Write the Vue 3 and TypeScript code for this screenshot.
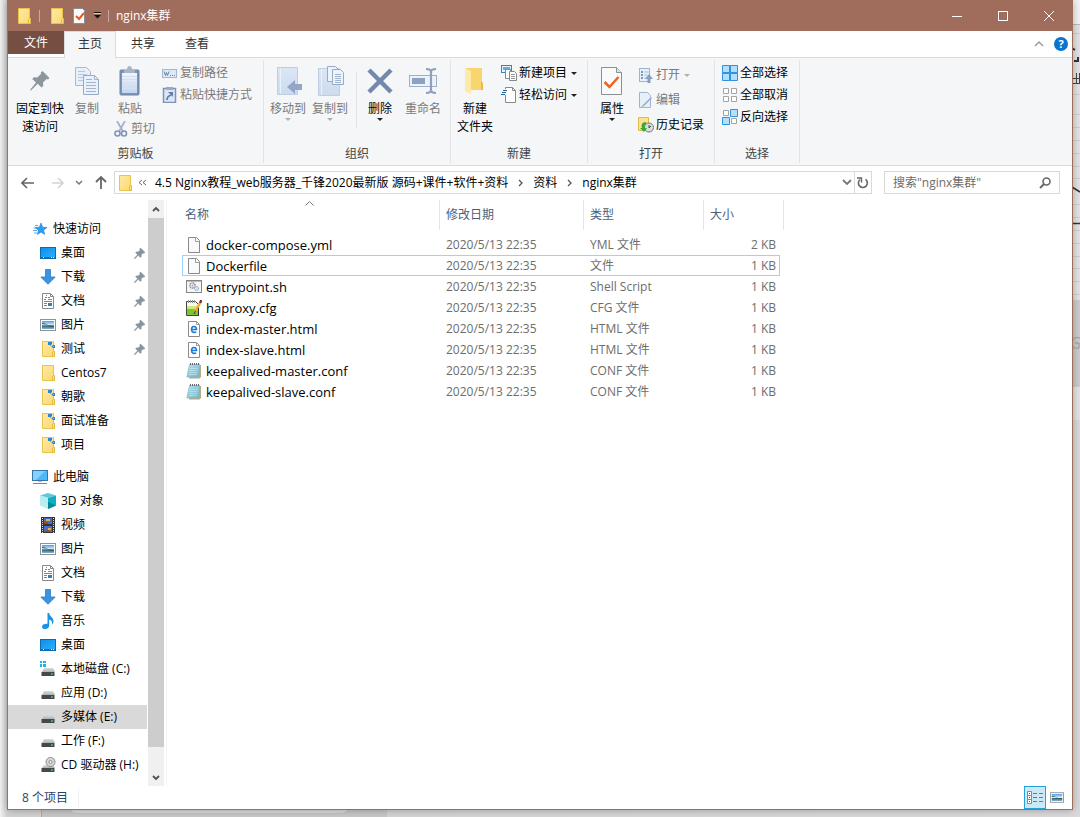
<script setup lang="ts">
import { ref } from 'vue'

interface NavItem {
  icon: string
  label: string
  pinned?: boolean
  selected?: boolean
}

interface FileRow {
  icon: string
  name: string
  date: string
  type: string
  size: string
  focused?: boolean
}

const query = ref('')

const tabs = ['主页', '共享', '查看']

const quickAccess: NavItem[] = [
  { icon: 'desktop', label: '桌面', pinned: true },
  { icon: 'download', label: '下载', pinned: true },
  { icon: 'document', label: '文档', pinned: true },
  { icon: 'picture', label: '图片', pinned: true },
  { icon: 'folder-mark', label: '测试', pinned: true },
  { icon: 'folder', label: 'Centos7' },
  { icon: 'folder-mark', label: '朝歌' },
  { icon: 'folder-mark', label: '面试准备' },
  { icon: 'folder-mark', label: '项目' },
]

const thisPc: NavItem[] = [
  { icon: 'cube', label: '3D 对象' },
  { icon: 'video', label: '视频' },
  { icon: 'picture', label: '图片' },
  { icon: 'document', label: '文档' },
  { icon: 'download', label: '下载' },
  { icon: 'music', label: '音乐' },
  { icon: 'desktop', label: '桌面' },
  { icon: 'drive-os', label: '本地磁盘 (C:)' },
  { icon: 'drive', label: '应用 (D:)' },
  { icon: 'drive', label: '多媒体 (E:)', selected: true },
  { icon: 'drive', label: '工作 (F:)' },
  { icon: 'drive-cd', label: 'CD 驱动器 (H:)' },
]

const date = '2020/5/13 22:35'
const files: FileRow[] = [
  { icon: 'file', name: 'docker-compose.yml', date, type: 'YML 文件', size: '2 KB' },
  { icon: 'file', name: 'Dockerfile', date, type: '文件', size: '1 KB', focused: true },
  { icon: 'shell', name: 'entrypoint.sh', date, type: 'Shell Script', size: '1 KB' },
  { icon: 'notepad-plus', name: 'haproxy.cfg', date, type: 'CFG 文件', size: '1 KB' },
  { icon: 'html', name: 'index-master.html', date, type: 'HTML 文件', size: '1 KB' },
  { icon: 'html', name: 'index-slave.html', date, type: 'HTML 文件', size: '1 KB' },
  { icon: 'conf', name: 'keepalived-master.conf', date, type: 'CONF 文件', size: '1 KB' },
  { icon: 'conf', name: 'keepalived-slave.conf', date, type: 'CONF 文件', size: '1 KB' },
]
</script>

<template>
  <div class="desktop">
    <svg class="behind-right" width="8" height="420" viewBox="0 0 8 420" aria-hidden="true">
      <rect width="8" height="24" fill="#f4f4f4" />
      <rect y="24" width="8" height="1" fill="#bbb" />
      <path d="M0 33.500h8M0 94.500h8M0 114.500h8M0 127.500h8M0 140.500h8M0 153.500h8M0 166.500h8M0 178.500h8M0 204.500h8M0 217.500h8M0 230.500h8M0 243.500h8M0 256.500h8M0 268.500h8M0 281.500h8M0 294.500h8" stroke="#d0d0d0" />
      <path d="M0 48l3 2M2 61h4v-4" stroke="#334" stroke-width="2" fill="none" />
      <path d="M0 78.500h8M0 83.500h8M4.500 73v10M7.500 73v10" stroke="#444" />
      <path d="M0 187l8 5M0 223.500h8" stroke="#333" stroke-width="1.500" />
      <rect y="300" width="8" height="87" fill="#cdcdcd" />
      <path d="M8 338c-4-1-8 0-8 5s4 6 7 5v-5H3" stroke="#999" fill="none" />
    </svg>
    <svg class="behind-bottom" width="346" height="8" viewBox="0 0 346 8" aria-hidden="true">
      <path d="M.5 0v8" fill="none" stroke="#aaa" />
      <path d="M30 0v1q1 3 6 3h264q6 0 6-3V0z" fill="#dcdcdc" />
      <path d="M306 1.500q0 3-6 3H36q-6 0-6-3" fill="none" stroke="#c4c4c4" />
    </svg>

    <svg class="sprite" width="0" height="0" aria-hidden="true">
      <defs>
        <linearGradient id="g-folder" x2="1" y2="1"><stop offset="0" stop-color="#ffe9a3" /><stop offset="1" stop-color="#fbd970" /></linearGradient>
        <linearGradient id="g-blue" x2="1" y2="1"><stop offset="0" stop-color="#0f8eea" /><stop offset="1" stop-color="#2cb1ff" /></linearGradient>
        <linearGradient id="g-pale" x2="0" y2="1"><stop offset="0" stop-color="#dbe6f5" /><stop offset="1" stop-color="#cddbee" /></linearGradient>
        <linearGradient id="g-clip" x2="0" y2="1"><stop offset="0" stop-color="#f0f5fc" /><stop offset="1" stop-color="#c3d5ef" /></linearGradient>
        <linearGradient id="g-drive" x2="0" y2="1"><stop offset="0" stop-color="#dcdcdc" /><stop offset="1" stop-color="#aeb1b4" /></linearGradient>
        <linearGradient id="g-pic" x2="0" y2="1"><stop offset="0" stop-color="#4d9ae8" /><stop offset=".5" stop-color="#dcefff" /><stop offset=".6" stop-color="#315e63" /><stop offset="1" stop-color="#8cb6cf" /></linearGradient>
        <linearGradient id="g-conf" x2="1" y2="1"><stop offset="0" stop-color="#b5e2ec" /><stop offset="1" stop-color="#6fb4c8" /></linearGradient>
      </defs>
      <symbol id="i-folder" viewBox="0 0 16 16">
        <path d="M2.500.5h11v10.500h1v4.500h-12z" fill="url(#g-folder)" stroke="#e9c34b" />
        <path d="M12.500 15.500v-4l1-1h1v5z" fill="#ffe28a" stroke="#e2b93c" />
      </symbol>
      <symbol id="i-folder-mark" viewBox="0 0 16 16">
        <path d="M2.500.5h11v10.500h1v4.500h-12z" fill="url(#g-folder)" stroke="#e9c34b" />
        <path d="M12.500 15.500v-4l1-1h1v5z" fill="#ffe28a" stroke="#e2b93c" />
        <path d="M8 1h4v3H8zM12 4h3v3h-3z" fill="#3183c5" />
        <path d="M11 3l3 3M10 4l3 3" stroke="#78b5df" />
      </symbol>
      <symbol id="i-tick" viewBox="0 0 16 16">
        <path d="M2.500.5h9l2 2v13h-11z" fill="#fafafa" stroke="#8a8f96" />
        <path d="M5 8l3 3 5-6" fill="none" stroke="#f2561d" stroke-width="2" />
      </symbol>
      <symbol id="i-pin" viewBox="0 0 10 10">
        <path d="M6 0l4 4-1 .8-.8-.3L6.500 6.200l.1 1.600-.8.8L3.900 6.700.5 10 0 9.500 3.300 6.100 1.500 4.300l.8-.8 1.600.1L5.600 1.900 5.200.9z" fill="#8494a0" stroke="#8494a0" stroke-width=".5" />
      </symbol>
      <symbol id="i-star" viewBox="0 0 16 16">
        <path d="M9 2l1.600 4.200 4.400.3-3.500 2.700 1.200 4.300L9 11.100l-3.700 2.400 1.200-4.300L3 6.500l4.400-.3z" fill="#2a9df0" stroke="#1a7fd0" stroke-width=".6" />
        <path d="M3 4.500h3M1.500 7h3M1 9.500h4M2 12h3" stroke="#4cb0f2" />
      </symbol>
      <symbol id="i-desktop" viewBox="0 0 16 16">
        <rect x=".5" y="2.500" width="15" height="11" fill="url(#g-blue)" stroke="#0a6cae" />
        <path d="M1 12.500h14" stroke="#0b6fb9" /><path d="M3 12.500h1M11 12.500h1M13 12.500h1" stroke="#fff" />
      </symbol>
      <symbol id="i-download" viewBox="0 0 16 16">
        <path d="M5.500.5h5V8h4.700L8 15.300.8 8h4.700z" fill="#3a94e4" stroke="#2c7cc6" stroke-width=".8" />
      </symbol>
      <symbol id="i-document" viewBox="0 0 16 16">
        <path d="M2.500.5h8l3 3v12h-11z" fill="#fff" stroke="#84888c" /><path d="M10.500.5v3h3" fill="none" stroke="#84888c" />
        <path d="M4 6.500h2M5 4.500h2M6 2.500h1M8 4.500h2M8 6.500h4M4 8.500h8M4 10.500h3M4 12.500h3" fill="none" stroke="#2a9be8" />
        <path d="M8 10h4v3H8z" fill="#3f7f9d" />
      </symbol>
      <symbol id="i-picture" viewBox="0 0 16 16">
        <rect x=".5" y="2.500" width="15" height="11" fill="#fff" stroke="#8d9296" />
        <rect x="2" y="4" width="12" height="8" fill="url(#g-pic)" />
        <path d="M2 7l4 .5 4 2 4 .5v-1L9 8.500 5 6.500 2 6z" fill="#2d5b50" />
      </symbol>
      <symbol id="i-pc" viewBox="0 0 16 16">
        <rect x=".5" y="1.500" width="15" height="10" fill="#4bb9fa" stroke="#3976a8" /><path d="M1 2h12L4 11H1z" fill="#86d2ff" />
        <path d="M6 12h4v1H6z" fill="#9dc3dc" /><path d="M1 14.500h14" stroke="#6888a8" />
      </symbol>
      <symbol id="i-cube" viewBox="0 0 16 16">
        <path d="M0 2.500L8 0l8 2.500L8 5z" fill="#62c8d8" /><path d="M0 2.500L8 5v11l-8-3.500z" fill="#b8eef0" /><path d="M16 2.500L8 5v11l8-3.500z" fill="#10aebf" /><path d="M8 9l8 3.500L8 16z" fill="#068898" />
      </symbol>
      <symbol id="i-video" viewBox="0 0 16 16">
        <path d="M1 0h14v16H1z" fill="#333" /><path d="M4 1h8v6H4zM4 9h8v6H4z" fill="#4470c8" />
        <path d="M6 2h4v2H6zM8 11h3v2H8z" fill="#e6b52b" /><path d="M4 5h4v2H4zM5 13h4v2H5z" fill="#a74232" />
        <path d="M2.500 1v15M13.500 1v15" stroke="#ddd" stroke-dasharray="1 1" />
      </symbol>
      <symbol id="i-music" viewBox="0 0 16 16">
        <path d="M7.500 0h1.700c0 3 4.300 4.500 4.300 8.200 0 1.500-.6 2.500-1.500 3.600.6-2.900-.4-4.600-2.800-5.300v6.300c0 1.800-1.700 3.200-3.900 3.200-1.900 0-3.300-.9-3.300-2.300 0-1.800 2.300-3.200 5.500-2.900z" fill="#1693ea" />
      </symbol>
      <symbol id="i-drive" viewBox="0 0 16 16">
        <path d="M4 6h9l2 4H2z" fill="url(#g-drive)" /><path d="M1.500 10h13v4h-13z" fill="#45494c" /><path d="M11 12h2" stroke="#5df28b" />
      </symbol>
      <symbol id="i-drive-os" viewBox="0 0 16 16">
        <path d="M4 7h9l2 4H2z" fill="url(#g-drive)" /><path d="M1.500 11h13v4h-13z" fill="#45494c" /><path d="M11 13h2" stroke="#5df28b" />
        <path d="M0 0h2v2H0zM3 0h3v2H3zM0 3h2v3H0zM3 3h3v3H3z" fill="#19b7e8" />
      </symbol>
      <symbol id="i-drive-cd" viewBox="0 0 16 16">
        <path d="M4 8h9l2 3H2z" fill="url(#g-drive)" /><path d="M1.500 11h13v4h-13z" fill="#45494c" /><path d="M11 13h2" stroke="#5df28b" />
        <circle cx="10.500" cy="5" r="4.500" fill="#d8d8d8" stroke="#8e8e8e" /><circle cx="10.500" cy="5" r="1.500" fill="#fff" stroke="#888" />
      </symbol>
      <symbol id="i-file" viewBox="0 0 16 16">
        <path d="M2.500.5h8l3 3v12h-11z" fill="#fafafa" stroke="#8a8a8a" /><path d="M9.500.5v4h4" fill="none" stroke="#9c9c9c" />
      </symbol>
      <symbol id="i-shell" viewBox="0 0 16 16">
        <rect x=".5" y="1.500" width="15" height="12" fill="#f5f5f5" stroke="#858585" /><path d="M1 2.500h14" stroke="#bcbcbc" />
        <circle cx="6.500" cy="6.500" r="2.600" fill="none" stroke="#8b9299" stroke-dasharray="1.200 .6" stroke-width="1.600" /><circle cx="6.500" cy="6.500" r="1" fill="#aaa" />
        <circle cx="10.500" cy="9.500" r="2" fill="#d5e6f4" stroke="#76a3c4" stroke-dasharray="1.200 .5" />
      </symbol>
      <symbol id="i-notepad-plus" viewBox="0 0 16 16">
        <path d="M.5 1.500h9l3 3v11H.5z" fill="#f8faf0" stroke="#444" /><path d="M1 6h11v5H1z" fill="#cdea7c" /><path d="M1 9h11v6H1z" fill="#7cc434" />
        <path d="M2.500 0v3M4.500 0v3M6.500 0v3M8.500 0v3" stroke="#999" /><path d="M14 3L9 12" stroke="#f0a92a" stroke-width="2.500" /><path d="M15.500 0L14 3" stroke="#902828" stroke-width="2.500" /><path d="M9.500 11L8 14" stroke="#433" /><path d="M12.500 8v8" stroke="#333" />
      </symbol>
      <symbol id="i-html" viewBox="0 0 16 16">
        <path d="M2.500.5h8l3 3v12h-11z" fill="#fff" stroke="#8a8a8a" /><path d="M10.500.5v3h3" fill="none" stroke="#9c9c9c" />
        <path d="M6 8.500h4.500C10.500 4.500 5.500 4.500 5.500 8.300c0 3.400 3 3.500 4.700 2.600" fill="none" stroke="#1a7cd8" stroke-width="1.600" />
      </symbol>
      <symbol id="i-conf" viewBox="0 0 16 16">
        <path d="M5 2h10v12l-1.500 1.500H3z" fill="#b5ac86" /><path d="M3.500 1.500h10.500L12.500 14H.8z" fill="url(#g-conf)" stroke="#7fb2c0" stroke-width=".6" />
        <path d="M4 5.500h8M3.500 7.500h8M3.500 9.500h8M3 11.500h8" stroke="#c4e8f1" stroke-width=".6" /><path d="M4.500 0v2M6.500 0v2M8.500 0v2M10.500 0v2M12.500 0v2" stroke="#667" />
      </symbol>
    </svg>

    <main class="window">
      <header class="titlebar">
        <svg class="ic16" aria-hidden="true"><use href="#i-folder" /></svg>
        <i class="tsep"></i>
        <svg class="ic16 tb-folder" aria-hidden="true"><use href="#i-folder" /></svg>
        <svg class="ic16 tb-tick" aria-hidden="true"><use href="#i-tick" /></svg>
        <button class="bare tb-more" aria-label="自定义快速访问工具栏">
          <svg width="7" height="7" viewBox="0 0 7 7"><path d="M0 .5h7" stroke="#111" /><path d="M0 3h7L3.500 6.500z" fill="#111" /><path d="M0 1.500h7" stroke="#dcc" /></svg>
        </button>
        <i class="tsep"></i>
        <h1>nginx集群</h1>
        <div class="winbtns">
          <button class="bare" aria-label="最小化"><svg width="10" height="10"><path d="M0 5.500h10" stroke="#fff" /></svg></button>
          <button class="bare" aria-label="最大化"><svg width="10" height="10"><rect x=".5" y=".5" width="9" height="9" fill="none" stroke="#fff" /></svg></button>
          <button class="bare" aria-label="关闭"><svg width="10" height="10"><path d="M0 0l10 10M10 0L0 10" stroke="#fff" /></svg></button>
        </div>
      </header>

      <nav class="tabs">
        <button class="tab file">文件</button>
        <button v-for="(t, i) in tabs" :key="t" class="tab" :class="{ active: i === 0 }">{{ t }}</button>
        <div class="tabs-right">
          <button class="bare" aria-label="折叠功能区"><svg width="10" height="6"><path d="M1 5l4-4 4 4" fill="none" stroke="#a0a0a0" stroke-width="1.500" /></svg></button>
          <button class="bare help" aria-label="帮助">?</button>
        </div>
      </nav>

      <section class="ribbon">
        <div class="group g-clip">
          <div class="body">
            <button class="big w-pin">
              <svg width="22" height="28" viewBox="0 0 22 28"><path d="M13.500 4l7 7-1.500 1.500-1.500-.5-3.500 3.500.3 3.200-1.800 1.800-3.800-3.800L2 23.500 1 23l6-7.500-3.800-3.500L5 10.200l3.200.3L12 7l-.2-1.500z" fill="#8c979d" /></svg>
              <span>固定到快<br>速访问</span>
            </button>
            <button class="big w-copy off">
              <svg width="26" height="28" viewBox="0 0 26 28"><path d="M1.500.5h11l4 4v14h-15z" fill="#e7eff9" stroke="#a7bbd7" /><path d="M4 4.500h7M4 7.500h9M4 10.500h9M4 13.500h9" stroke="#b5c6de" /><path d="M9.500 8.500h11l4 4v15h-15z" fill="#eaf1fa" stroke="#97abc9" /><path d="M20.500 8.500v4h4M12 12.500h6M12 15.500h10M12 18.500h10M12 21.500h10M12 24.500h10" fill="none" stroke="#a1b4d0" /></svg>
              <span>复制</span>
            </button>
            <div class="stack w-paste">
              <button class="big off">
                <svg width="22" height="30" viewBox="0 0 22 30"><rect x="1" y="4" width="19" height="25" rx="1" fill="#7f93b8" stroke="#6f85ab" /><path d="M3 7h15v20H3z" fill="url(#g-clip)" /><path d="M3 10.500h15M3 13.500h15M3 16.500h15M3 19.500h15M3 22.500h15" stroke="#d5e1f3" /><path d="M5 4h3q0-4 2.500-4T13 4h3v3H5z" fill="#aab6c8" /></svg>
                <span>粘贴</span>
              </button>
              <button class="small cut off">
                <svg class="ic16" viewBox="0 0 16 16"><path d="M4 0l6 10.500M12 0L6 10.500" stroke="#a3b2c9" stroke-width="1.800" /><circle cx="4.500" cy="12.500" r="2.500" fill="none" stroke="#7f95b9" stroke-width="1.600" /><circle cx="11" cy="12.500" r="2.500" fill="none" stroke="#7f95b9" stroke-width="1.600" /></svg>
                <span>剪切</span>
              </button>
            </div>
            <div class="stack smalls">
              <button class="small off">
                <svg class="ic16" viewBox="0 0 16 16"><rect x=".5" y="4.500" width="14" height="8" fill="#dfe9f6" stroke="#a3b7d5" /><path d="M2 6.500l1.500 4 1-3 1 3L7 6.500" fill="none" stroke="#6a83ab" /><path d="M8 10.500h1M10 10.500h1M12 10.500h1" stroke="#6a83ab" /></svg>
                <span>复制路径</span>
              </button>
              <button class="small off">
                <svg class="ic16" viewBox="0 0 16 16"><rect x="1.500" y="1.500" width="12" height="14" fill="#dbe6f5" stroke="#7f93b8" stroke-width="1.500" /><path d="M4 0h7v3H4z" fill="#98a9c6" /><path d="M5 13c0-3 1-4 4-5" fill="none" stroke="#607ca9" stroke-width="1.800" /><path d="M6 5h5v5z" fill="#607ca9" /></svg>
                <span>粘贴快捷方式</span>
              </button>
            </div>
          </div>
          <h2>剪贴板</h2>
        </div>

        <div class="group g-org">
          <div class="body">
            <button class="big w-move off">
              <svg width="28" height="28" viewBox="0 0 28 28"><path d="M3.500.5h20v27h-20z" fill="url(#g-pale)" stroke="#bdcee5" /><path d="M6.500 1v26" stroke="#e9f1fa" /><path d="M13 20l8-7v4h7v6h-7v4z" fill="#93a6c8" /></svg>
              <span>移动到</span><i class="caret"></i>
            </button>
            <button class="big w-move off">
              <svg width="28" height="30" viewBox="0 0 28 30"><path d="M2.500 2.500h21v27h-21z" fill="url(#g-pale)" stroke="#bdcee5" /><path d="M5.500 3v26" stroke="#e9f1fa" /><path d="M11.500.5h8l3 3v12h-11z" fill="#edf3fb" stroke="#96abc9" /><path d="M16.500 3.500h8l3 3v12h-11z" fill="#edf3fb" stroke="#96abc9" /><path d="M19 8.500h6M19 10.500h6M19 12.500h6M19 14.500h6M19 16.500h6" stroke="#a1b4d0" /></svg>
              <span>复制到</span><i class="caret"></i>
            </button>
            <i class="inner-sep"></i>
            <button class="big w-del">
              <svg width="26" height="28" viewBox="0 0 26 28"><path d="M2 3l22 22M24 3L2 25" stroke="#7488ad" stroke-width="4.500" /></svg>
              <span>删除</span><i class="caret"></i>
            </button>
            <button class="big w-ren off">
              <svg width="28" height="28" viewBox="0 0 28 28"><rect x=".5" y="8.500" width="27" height="11" fill="#edf3fb" stroke="#9db1ce" /><path d="M3 11h13v6H3z" fill="#8ca1c4" /><path d="M17 2q5 0 5 3 0-3 5-3M22 4v20M17 26q5 0 5-3 0 3 5 3" fill="none" stroke="#8ea0bd" stroke-width="2.200" /></svg>
              <span>重命名</span>
            </button>
          </div>
          <h2>组织</h2>
        </div>

        <div class="group g-new">
          <div class="body">
            <button class="big w-newf">
              <svg width="22" height="28" viewBox="0 0 22 28"><path d="M2 1h16v15l1 1v6H2z" fill="#f9d56f" /><path d="M1 1l6 3v23l-6-3z" fill="#ffe9a6" /><path d="M17 14l2 2v7h-2z" fill="#e9bb4a" /></svg>
              <span>新建<br>文件夹</span>
            </button>
            <div class="stack smalls">
              <button class="small">
                <svg class="ic16" viewBox="0 0 16 16"><rect x=".5" y=".5" width="10" height="7" fill="#e4f3ff" stroke="#3b84ad" /><path d="M2 2h7v3H2z" fill="#5fb1df" /><path d="M4.500 4.500h5v9h-5z" fill="#fff" stroke="#888" /><path d="M8.500 6.500h5l2 2v7h-7z" fill="#fff" stroke="#888" /><path d="M10 9.500h4M10 11.500h4M10 13.500h4" stroke="#999" /></svg>
                <span>新建项目</span><i class="caret"></i>
              </button>
              <button class="small">
                <svg class="ic16" viewBox="0 0 16 16"><path d="M4.500.5h7l3 3v12h-10z" fill="#fff" stroke="#888" /><path d="M11.500.5v3h3" fill="none" stroke="#888" /><path d="M3 2h3v6H2z" fill="#f5f6f7" /><path d="M2 3.500h4M1 5.500h4M0 7.500h4" stroke="#25659a" /></svg>
                <span>轻松访问</span><i class="caret"></i>
              </button>
            </div>
          </div>
          <h2>新建</h2>
        </div>

        <div class="group g-open">
          <div class="body">
            <button class="big w-prop">
              <svg width="22" height="28" viewBox="0 0 22 28"><path d="M.5.5h15l5 5v22H.5z" fill="#fafafa" stroke="#8a8f93" /><path d="M15.500.5v5h5" fill="#e4e4e4" stroke="#8a8f93" /><path d="M3.500 15l5 5 9-10" fill="none" stroke="#f2621f" stroke-width="2.500" /></svg>
              <span>属性</span><i class="caret"></i>
            </button>
            <div class="stack smalls wide">
              <button class="small off">
                <svg class="ic16" viewBox="0 0 16 16"><rect x="1.500" y="1.500" width="10" height="13" fill="#e7eff9" stroke="#9fb3d2" /><path d="M3 4h2v2H3zM3 7h2v2H3zM3 10h2v2H3z" fill="#7f98be" /><path d="M6.500 5h4M6.500 8h3M6.500 11h2" stroke="#a8bad6" /><path d="M11 7l4 5h-2.500v4h-3v-4H7z" fill="#879dc2" /></svg>
                <span>打开</span><i class="caret"></i>
              </button>
              <button class="small off">
                <svg class="ic16" viewBox="0 0 16 16"><path d="M1.500.5h8l3 3v12h-11z" fill="#e7eff9" stroke="#9fb3d2" /><path d="M14 6l-8 8-2 1 1-2 8-8z" fill="#8fa8cb" /><path d="M3 15l10-10" stroke="#b9cae2" /></svg>
                <span>编辑</span>
              </button>
              <button class="small">
                <svg class="ic16" viewBox="0 0 16 16"><path d="M.5.5h10v13H.5z" fill="#ffe38c" stroke="#dfbc47" /><circle cx="11" cy="10.500" r="4.500" fill="#ddd" stroke="#777" /><path d="M11 8v3l2-2" fill="none" stroke="#444" /><path d="M8 5C4 5 3 8 4 11H2l4 4 3-4H7c-1-2 0-4 1-4z" fill="#35a93a" /></svg>
                <span>历史记录</span>
              </button>
            </div>
          </div>
          <h2>打开</h2>
        </div>

        <div class="group g-sel">
          <div class="body">
            <div class="stack smalls">
              <button class="small">
                <svg class="ic16" viewBox="0 0 16 16"><path d="M.5.5h7v7h-7zM8.500.5h7v7h-7zM.5 8.500h7v7h-7zM8.500 8.500h7v7h-7z" fill="#b4dffa" stroke="#3093e2" /><path d="M8 0v16M0 8h16" stroke="#3093e2" /></svg>
                <span>全部选择</span>
              </button>
              <button class="small">
                <svg class="ic16" viewBox="0 0 16 16"><path d="M1.500 1.500h5v5h-5zM9.500 1.500h5v5h-5zM1.500 9.500h5v5h-5zM9.500 9.500h5v5h-5z" fill="#fff" stroke="#a3a3a3" /></svg>
                <span>全部取消</span>
              </button>
              <button class="small">
                <svg class="ic16" viewBox="0 0 16 16"><path d="M1.500 1.500h5v5h-5zM9.500 9.500h5v5h-5z" fill="#fff" stroke="#a3a3a3" /><path d="M8.500.5h7v7h-7zM.5 8.500h7v7h-7z" fill="#b4dffa" stroke="#3093e2" /></svg>
                <span>反向选择</span>
              </button>
            </div>
          </div>
          <h2>选择</h2>
        </div>
      </section>

      <div class="address-row">
        <button class="bare nb" aria-label="返回"><svg width="14" height="12"><path d="M1 6h12M6 1L1 6l5 5" fill="none" stroke="#666" stroke-width="1.600" /></svg></button>
        <button class="bare nb" aria-label="前进"><svg width="14" height="12"><path d="M1 6h11M7 1l5 5-5 5" fill="none" stroke="#d4d4d4" stroke-width="1.600" /></svg></button>
        <button class="bare nb-s" aria-label="最近浏览的位置"><svg width="8" height="6"><path d="M1 1l3 3 3-3" fill="none" stroke="#777" stroke-width="1.500" /></svg></button>
        <button class="bare nb-u" aria-label="上移"><svg width="12" height="13"><path d="M6 13V1M1 6l5-5 5 5" fill="none" stroke="#666" stroke-width="1.800" /></svg></button>
        <div class="address">
          <svg class="ic16" aria-hidden="true"><use href="#i-folder" /></svg>
          <svg class="chev2" width="9" height="7"><path d="M4 1L1 3.500 4 6M8 1L5 3.500 8 6" fill="none" stroke="#666" /></svg>
          <a href="#">4.5 Nginx教程_web服务器_千锋2020最新版 源码+课件+软件+资料</a>
          <svg class="chev" width="5" height="8"><path d="M1 1l3 3-3 3" fill="none" stroke="#555" stroke-width="1.300" /></svg>
          <a href="#">资料</a>
          <svg class="chev" width="5" height="8"><path d="M1 1l3 3-3 3" fill="none" stroke="#555" stroke-width="1.300" /></svg>
          <a href="#">nginx集群</a>
          <button class="bare drop" aria-label="以前的位置"><svg width="10" height="7"><path d="M1 1l4 4 4-4" fill="none" stroke="#777" stroke-width="1.800" /></svg></button>
          <button class="bare refresh" aria-label="刷新"><svg width="12" height="12" viewBox="0 0 12 12"><path d="M3 2.500A4.500 4.500 0 1 0 8.500 2.300" fill="none" stroke="#666" stroke-width="1.600" /><path d="M0 1h4.500v4.500" fill="none" stroke="#666" stroke-width="1.400" /></svg></button>
        </div>
        <form class="search" @submit.prevent>
          <input v-model="query" type="text" aria-label="搜索" placeholder="搜索&quot;nginx集群&quot;">
          <button class="bare" aria-label="开始搜索"><svg width="12" height="12"><circle cx="7.500" cy="4.500" r="3.500" fill="none" stroke="#666" stroke-width="1.600" /><path d="M5 7L1 11" stroke="#666" stroke-width="2" /></svg></button>
        </form>
      </div>

      <div class="content">
        <nav class="tree">
          <div class="tree-list">
            <a href="#" class="node root"><svg class="ic16" aria-hidden="true"><use href="#i-star" /></svg><span>快速访问</span></a>
            <a v-for="n in quickAccess" :key="n.label" href="#" class="node">
              <svg class="ic16" aria-hidden="true"><use :href="'#i-' + n.icon" /></svg><span>{{ n.label }}</span>
              <svg v-if="n.pinned" class="pin" width="11" height="11" aria-hidden="true"><use href="#i-pin" /></svg>
            </a>
            <a href="#" class="node root pc"><svg class="ic16" aria-hidden="true"><use href="#i-pc" /></svg><span>此电脑</span></a>
            <a v-for="n in thisPc" :key="n.label" href="#" class="node" :class="{ selected: n.selected }">
              <svg class="ic16" aria-hidden="true"><use :href="'#i-' + n.icon" /></svg><span>{{ n.label }}</span>
            </a>
          </div>
          <div class="scrollbar">
            <button class="bare" aria-label="向上滚动"><svg width="8" height="7"><path d="M1 5l3-3 3 3" fill="none" stroke="#505050" stroke-width="1.800" /></svg></button>
            <div class="thumb"></div>
            <button class="bare" aria-label="向下滚动"><svg width="8" height="7"><path d="M1 2l3 3 3-3" fill="none" stroke="#505050" stroke-width="1.800" /></svg></button>
          </div>
        </nav>

        <section class="listing">
          <table>
            <colgroup><col class="c-name"><col class="c-date"><col class="c-type"><col class="c-size"><col class="c-end"></colgroup>
            <thead>
              <tr>
                <th><span>名称</span><svg class="sort" width="9" height="5" aria-hidden="true"><path d="M.5 4.500l4-4 4 4" fill="none" stroke="#777" /></svg></th>
                <th>修改日期</th>
                <th>类型</th>
                <th colspan="2">大小</th>
              </tr>
            </thead>
            <tbody>
              <tr v-for="f in files" :key="f.name" :class="{ focused: f.focused }">
                <td class="name"><div><svg class="ic16" aria-hidden="true"><use :href="'#i-' + f.icon" /></svg><span>{{ f.name }}</span></div></td>
                <td>{{ f.date }}</td>
                <td>{{ f.type }}</td>
                <td class="size">{{ f.size }}</td>
              </tr>
            </tbody>
          </table>
        </section>
      </div>

      <footer class="status">
        <span class="count">8 个项目</span>
        <div class="views">
          <button class="view on" aria-label="详细信息">
            <svg width="16" height="14" viewBox="0 0 16 14"><path d="M.5.5h4v4h-4zM.5 4.500h4v4h-4zM.5 8.500h4v4h-4z" fill="#fff" stroke="#888" /><path d="M2 2.500h1M2 6.500h1" stroke="#346" /><path d="M2 10.500h1" stroke="#c22" /><path d="M6 2.500h4M12 2.500h4M6 6.500h4M12 6.500h4M6 10.500h4M12 10.500h4" stroke="#777" /></svg>
          </button>
          <button class="view" aria-label="大缩略图">
            <svg class="ic14" viewBox="0 2 16 12" aria-hidden="true"><use href="#i-picture" width="16" height="16" /></svg>
          </button>
        </div>
      </footer>
    </main>
  </div>
</template>

<style>
html,
body {
  margin: 0;
  background: #e4e4e4;
}
</style>

<style scoped>
.desktop {
  box-sizing: border-box;
  position: relative;
  display: flex;
  min-height: 100vh;
  padding: 0 7px 7px;
  background: linear-gradient(90deg, #f2f2f2 0, #d2d2d2 7px, #dadada 100%);
  font-family: "Open Sans", "Noto Sans CJK SC", sans-serif;
  font-size: 12px;
  line-height: 18px;
  color: #000;
}

.sprite,
.behind-right,
.behind-bottom {
  position: absolute;
}

.behind-right {
  top: 0;
  right: 0;
  background: #e4e4e4;
}

.behind-bottom {
  bottom: 0;
  left: 41px;
  background: #c8c8c8;
}

.window {
  position: relative;
  box-sizing: border-box;
  display: flex;
  flex: 1;
  flex-direction: column;
  min-width: 0;
  background: #fff;
  border: 1px solid #a06c5c;
  border-top: 0;
  box-shadow: 0 0 8px rgba(0, 0, 0, 0.3);
}

button {
  padding: 0;
  font: inherit;
  color: inherit;
  background: none;
  border: 0;
}

.bare {
  display: flex;
  align-items: center;
  justify-content: center;
}

svg {
  flex: none;
  display: block;
}

.ic16 {
  width: 16px;
  height: 16px;
}

.ic14 {
  width: 14px;
  height: 11px;
}

h1,
h2 {
  margin: 0;
  font-size: 12px;
  font-weight: 400;
}

a {
  color: inherit;
  text-decoration: none;
}

/* title bar */
.titlebar {
  display: flex;
  align-items: center;
  height: 31px;
  padding: 0 1px 0 9px;
  margin: 0 -1px;
  color: #fff;
  background: #a06c5c;
}

.tsep {
  width: 1px;
  height: 12px;
  margin: 0 7px;
  background: #c9a99f;
}

.tb-folder {
  margin-left: 2px;
}

.tb-tick {
  margin-left: 6px;
}

.tb-more {
  width: 7px;
  margin-left: 7px;
}

.titlebar h1 {
  flex: 1;
}

.winbtns {
  display: flex;
}

.winbtns button {
  width: 46px;
  height: 30px;
}

/* tabs */
.tabs {
  display: flex;
  height: 26px;
  border-bottom: 1px solid #dadbdc;
}

.tab {
  box-sizing: border-box;
  width: 54px;
  height: 25px;
  color: #333;
}

.tab.file {
  width: 56px;
  height: 23px;
  color: #fff;
  background: #764f42;
}

.tab.active {
  width: 52px;
  height: 27px;
  padding-bottom: 2px;
  background: #f5f6f7;
  border: 1px solid #dadbdc;
  border-bottom: 0;
}

.tabs-right {
  display: flex;
  align-items: center;
  gap: 10px;
  margin-left: auto;
  padding-right: 4px;
}

.help {
  width: 14px;
  height: 14px;
  font-size: 11px;
  font-weight: 700;
  line-height: 14px;
  color: #fff;
  background: #0a74d0;
  border-radius: 7px;
}

/* ribbon */
.ribbon {
  display: flex;
  height: 103px;
  padding: 2px 0;
  background: #f5f6f7;
  border-bottom: 1px solid #dadbdc;
}

.group {
  box-sizing: border-box;
  display: flex;
  flex-direction: column;
  border-right: 1px solid #e2e3e4;
}

.g-clip { width: 256px; }
.g-org { width: 187px; }
.g-new { width: 137px; }
.g-open { width: 127px; }
.g-sel { width: 85px; }

.group h2 {
  height: 18px;
  color: #444;
  text-align: center;
}

.body {
  display: flex;
  flex: 1;
  padding-top: 4px;
}

.stack {
  display: flex;
  flex-direction: column;
}

.big {
  display: flex;
  flex-direction: column;
  align-items: center;
  height: 72px;
  padding-top: 2px;
}

.big svg {
  height: 30px;
  margin-bottom: 4px;
}

.big span {
  display: block;
  white-space: nowrap;
}

.off {
  color: #7a7a7a;
}

.w-pin { width: 64px; }
.w-copy { width: 30px; }
.w-paste { width: 56px; }
.w-paste .big { height: 54px; }
.w-move { width: 42px; }
.w-move:first-child { margin-left: 3px; }
.w-del { width: 46px; }
.w-ren { width: 40px; }
.w-newf { width: 48px; }
.w-prop { width: 48px; }

.inner-sep {
  width: 1px;
  height: 56px;
  margin: 8px 0 0 5px;
  background: #e2e3e4;
}

.caret {
  width: 0;
  height: 0;
  border: 3px solid transparent;
  border-top-color: #222;
  border-bottom: 0;
}

.off .caret {
  border-top-color: #b0b0b0;
}

.small {
  display: flex;
  align-items: center;
  height: 22px;
  white-space: nowrap;
}

.small span {
  margin-left: 2px;
}

.small .caret {
  margin-left: 4px;
}

.smalls {
  margin: -2px 0 0 2px;
}

.w-paste + .smalls {
  margin-left: 4px;
}

.cut {
  margin-left: 11px;
}

.w-prop + .smalls {
  margin-top: 0;
}

.wide {
  gap: 3px;
}

.g-sel .smalls {
  margin-left: 7px;
}

/* address */
.address-row {
  display: flex;
  align-items: center;
  height: 33px;
  padding: 0 12px 0 3px;
}

.nb { width: 30px; padding-left: 4px; }
.nb-s { width: 16px; }
.nb-u { width: 27px; }

.address {
  box-sizing: border-box;
  display: flex;
  flex: 1;
  align-items: center;
  height: 23px;
  padding-left: 2px;
  border: 1px solid #d9d9d9;
  white-space: nowrap;
}

.chev2 { margin: 0 8px 0 5px; }
.chev { margin: 0 10px; }

.drop {
  width: 14px;
  height: 21px;
  margin-left: auto;
}

.refresh {
  width: 17px;
  height: 21px;
  border-left: 1px solid #d9d9d9;
}

.search {
  box-sizing: border-box;
  display: flex;
  align-items: center;
  width: 176px;
  height: 23px;
  margin-left: 12px;
  padding: 0 8px;
  border: 1px solid #d9d9d9;
}

.search input {
  flex: 1;
  min-width: 0;
  padding: 0;
  font: inherit;
  background: none;
  border: 0;
  outline: 0;
}

.search input::placeholder {
  color: #6d6d6d;
  opacity: 1;
}

/* content */
.content {
  display: flex;
  flex: 1;
}

.tree {
  display: flex;
  width: 158px;
  border-right: 1px solid #f3f3f3;
}

.tree-list {
  flex: 1;
  padding: 18px 1px 0 0;
}

.node {
  display: flex;
  align-items: center;
  height: 24px;
  padding-left: 32px;
  white-space: nowrap;
}

.node span {
  margin-left: 5px;
}

.node.root {
  padding-left: 24px;
}

.node.pc {
  margin-top: 8px;
}

.node.selected {
  background: #d9d9d9;
}

.pin {
  margin: 0 2px 0 auto;
}

.scrollbar {
  display: flex;
  flex-direction: column;
  width: 16px;
  margin: 1px 2px 0 0;
  background: #f0f0f0;
}

.scrollbar .bare {
  height: 18px;
}

.thumb {
  flex: 1;
  margin-bottom: 21px;
  background: #cdcdcd;
}

.listing {
  flex: 1;
  padding: 1px 0 0 15px;
}

table {
  width: 602px;
  table-layout: fixed;
  border-collapse: separate;
  border-spacing: 0;
}

.c-name { width: 258px; }
.c-date { width: 144px; }
.c-type { width: 120px; }
.c-size { width: 76px; }
.c-end { width: 4px; }

th {
  position: relative;
  box-sizing: border-box;
  height: 30px;
  padding: 0 0 0 6px;
  font-weight: 400;
  color: #4c607a;
  text-align: left;
  border-right: 1px solid #e5e5e5;
}

th:first-child {
  padding-left: 3px;
}

.sort {
  position: absolute;
  top: 1px;
  left: 123px;
}

thead::after {
  display: block;
  height: 4px;
  content: "";
}

td {
  box-sizing: border-box;
  height: 21px;
  padding: 0 0 0 6px;
  line-height: 18px;
  color: #6d6d6d;
  border: solid transparent;
  border-width: 1px 0;
}

td.name {
  padding-left: 4px;
  font-size: 13px;
  color: #000;
}

td.name div {
  display: flex;
  gap: 4px;
  align-items: center;
}

td.size {
  padding-right: 4px;
  text-align: right;
}

.focused td {
  border-color: #99d1ff;
}

.focused td.name {
  padding-left: 3px;
  border-left-width: 1px;
}

.focused td.size {
  padding-right: 3px;
  border-right-width: 1px;
}

/* status */
.status {
  display: flex;
  align-items: center;
  height: 23px;
  padding-left: 14px;
  color: #2b4568;
}

.count {
  padding-right: 10px;
  border-right: 1px solid #f0f0f0;
}

.views {
  display: flex;
  margin: 0 4px 0 auto;
}

.view {
  box-sizing: border-box;
  display: flex;
  align-items: center;
  justify-content: center;
  width: 22px;
  height: 23px;
}

.view.on {
  background: #cce8f7;
  border: 1px solid #26a0da;
}
</style>
